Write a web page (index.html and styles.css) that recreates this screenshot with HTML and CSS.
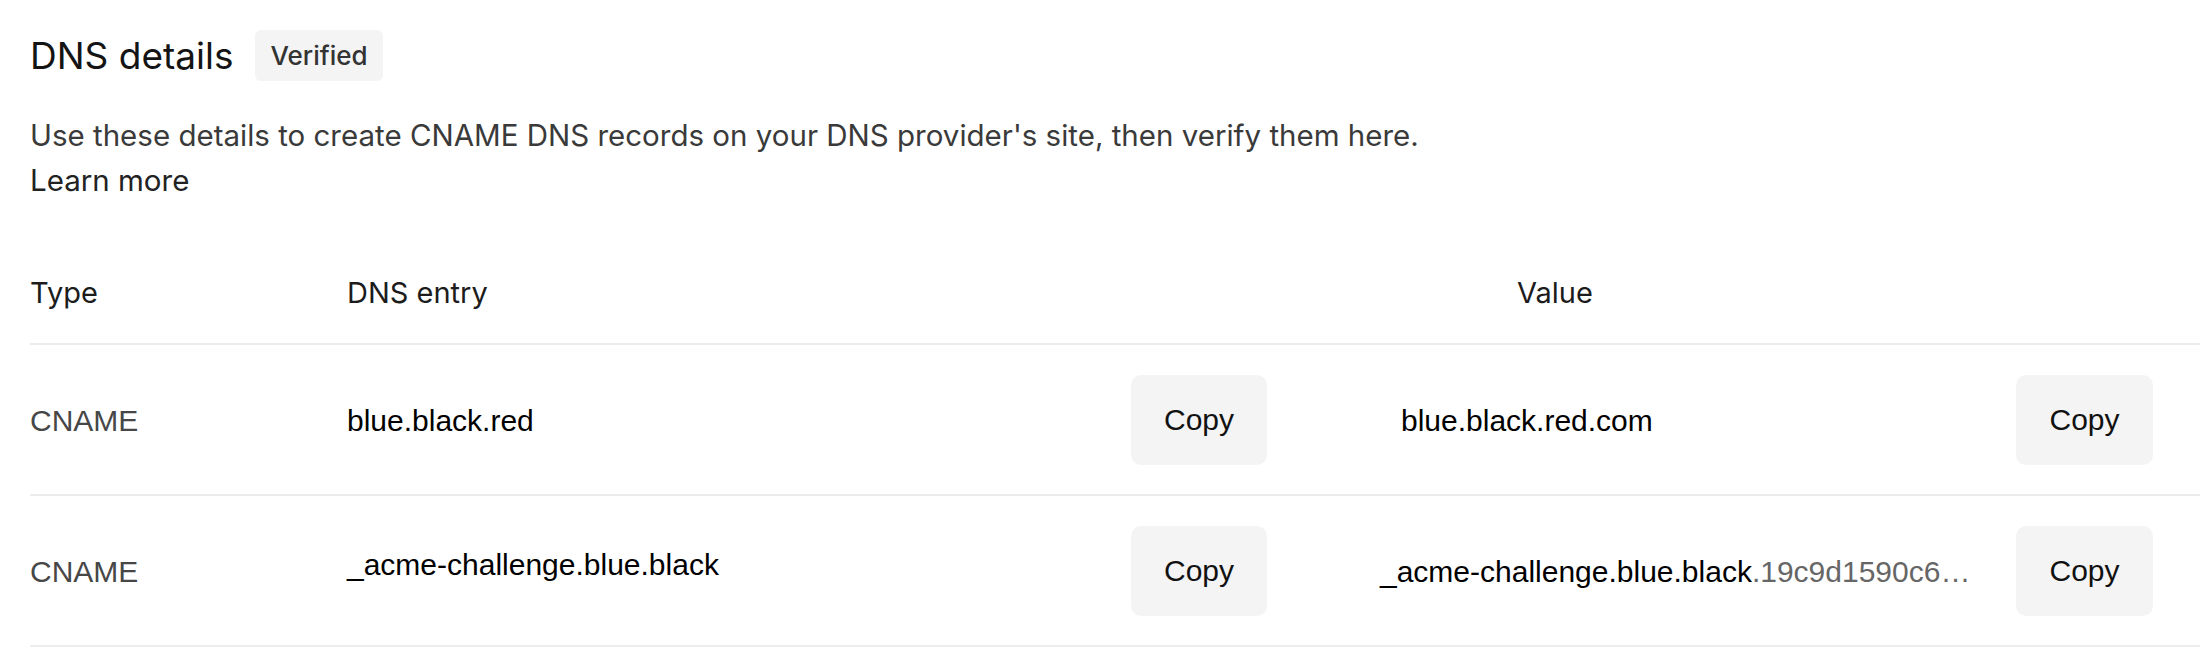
FILE: index.html
```html
<!DOCTYPE html>
<html lang="en">
<head>
<meta charset="utf-8">
<title>DNS details</title>
<link rel="stylesheet" href="styles.css">
</head>
<body>
<main class="dns">
  <header class="dns__head">
    <h2 class="dns__title">DNS details</h2>
    <span class="badge">Verified</span>
  </header>
  <p class="dns__desc">Use these details to create CNAME DNS records on your DNS provider's site, then verify them here.
    <a class="dns__link" href="#">Learn more</a>
  </p>
  <div class="records">
    <div class="records__row records__row--head">
      <div class="records__th">Type</div>
      <div class="records__th">DNS entry</div>
      <div></div>
      <div class="records__th records__th--value">Value</div>
      <div></div>
      <div></div>
    </div>
    <div class="records__row records__row--body">
      <div class="records__type">CNAME</div>
      <div class="records__entry">blue.black.red</div>
      <div><button class="copy" type="button">Copy</button></div>
      <div class="records__value">blue.black.red.com</div>
      <div><button class="copy copy--wide" type="button">Copy</button></div>
      <div></div>
    </div>
    <div class="records__row records__row--body">
      <div class="records__type">CNAME</div>
      <div class="records__entry records__entry--raised">_acme-challenge.blue.black</div>
      <div><button class="copy" type="button">Copy</button></div>
      <div class="records__value records__value--long">_acme-challenge.blue.black<span class="records__rest">.19c9d1590c6…</span></div>
      <div><button class="copy copy--wide" type="button">Copy</button></div>
      <div></div>
    </div>
  </div>
</main>
</body>
</html>
```

FILE: styles.css
```css
* {
  box-sizing: border-box;
}

body {
  margin: 0;
  background: #ffffff;
  font-family: Inter, "Noto Sans", sans-serif;
  color: #1a1a1a;
}

.dns {
  padding: 30px 0 0 30px;
}

.dns__head {
  display: flex;
  align-items: center;
  gap: 22px;
  height: 51px;
}

.dns__title {
  margin: 0;
  font-size: 37px;
  font-weight: 400;
  line-height: 51px;
  color: #141414;
}

.badge {
  height: 51px;
  line-height: 51px;
  padding: 0 15px;
  background: #f4f4f4;
  border-radius: 6px;
  font-size: 26px;
  font-weight: 500;
  color: #333333;
}

.dns__desc {
  margin: 32px 0 0;
  font-size: 29.5px;
  line-height: 45px;
  color: #3a3a3a;
}

.dns__link {
  display: block;
  color: #222222;
  text-decoration: none;
}

.records {
  margin-top: 40px;
}

.records__row {
  display: grid;
  grid-template-columns: 317px 784px 136px 749px 137px 1fr;
  align-items: center;
  border-bottom: 2px solid #ececec;
}

.records__row--head {
  padding: 27px 0 28px;
  font-size: 29px;
  line-height: 45px;
  color: #1c1c1c;
}

.records__th--value {
  padding-left: 250px;
}

.records__row--body {
  height: 151px;
  font-family: "Liberation Sans", Arial, sans-serif;
  font-size: 30px;
  color: #000000;
}

.records__type,
.records__entry,
.records__value {
  padding-top: 3px;
}

.records__type {
  color: #474747;
}

.records__entry--raised {
  margin-bottom: 14px;
}

.records__value {
  padding-left: 134px;
  white-space: nowrap;
}

.records__value--long {
  padding-left: 113px;
}

.records__rest {
  color: #666666;
}

.copy {
  display: block;
  width: 136px;
  height: 90px;
  padding: 0;
  border: 0;
  border-radius: 10px;
  background: #f4f4f4;
  font-family: "Liberation Sans", Arial, sans-serif;
  font-size: 30px;
  color: #111111;
}

.copy--wide {
  width: 137px;
}
```
